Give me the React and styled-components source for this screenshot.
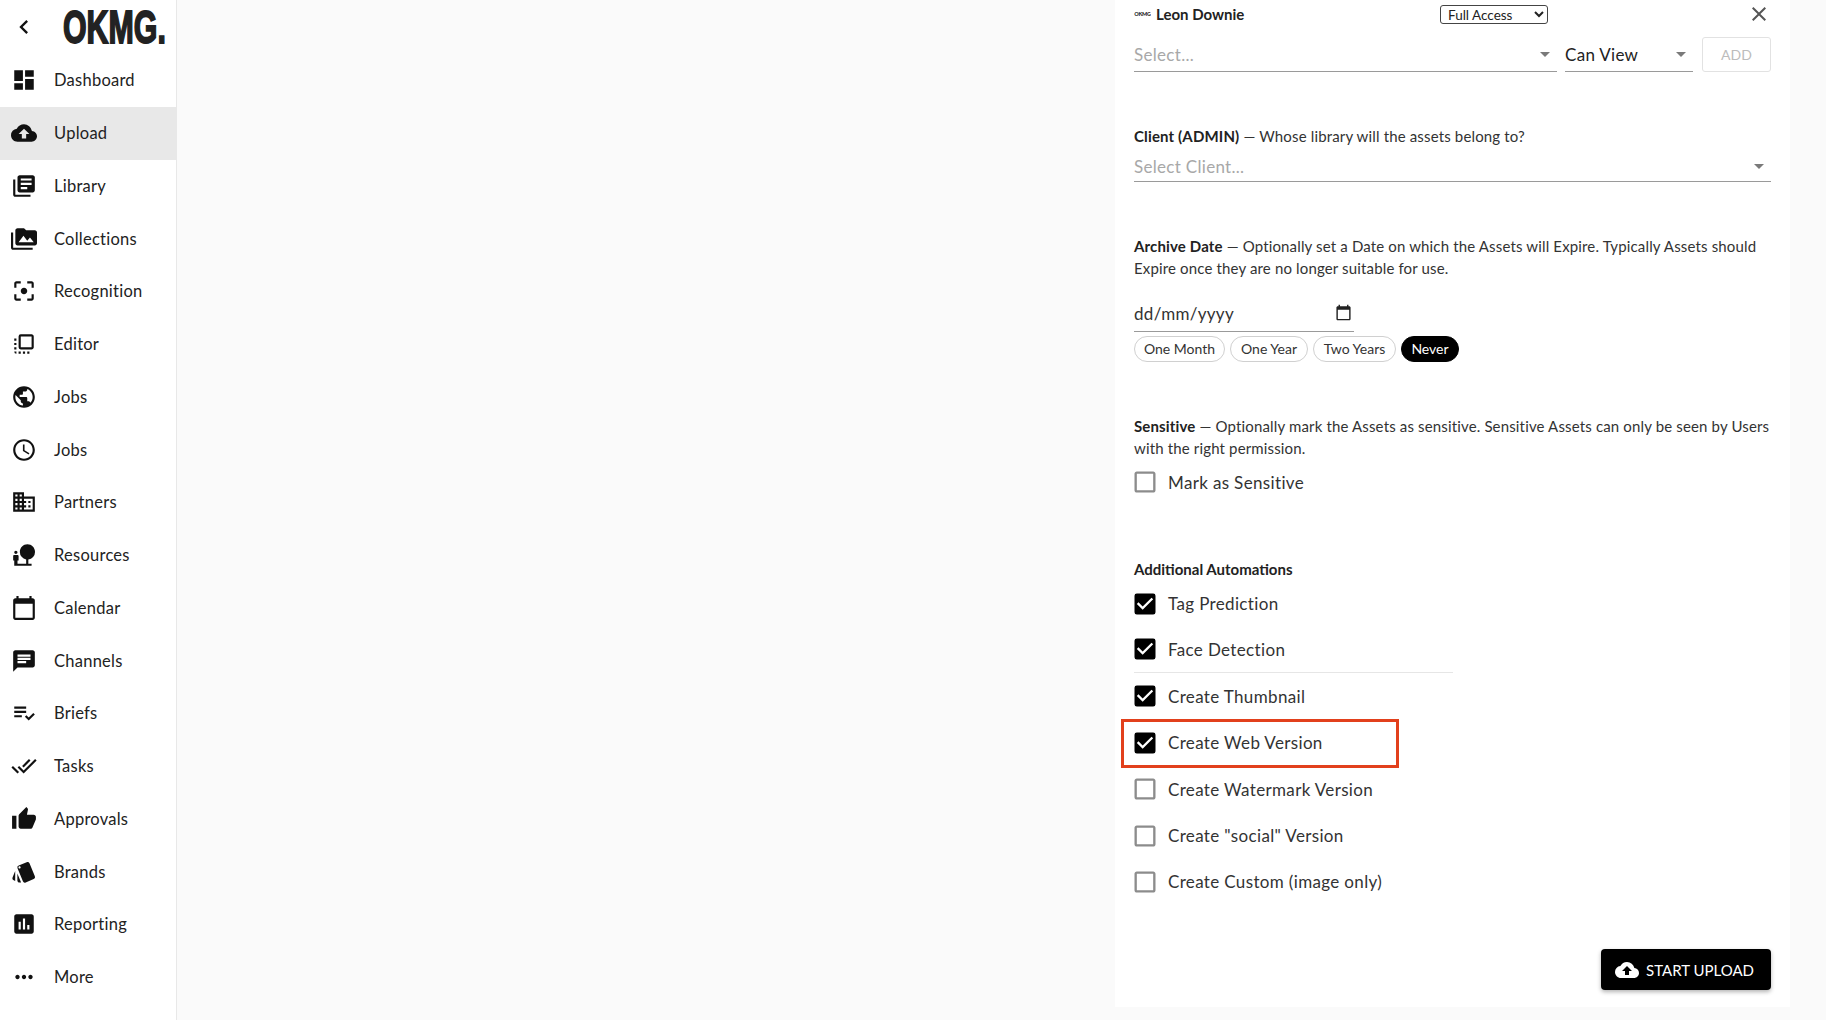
import React from "react";
import styled, { createGlobalStyle } from "styled-components";
import {
  MdDashboard, MdCloudUpload, MdLibraryBooks, MdPermMedia, MdFilterCenterFocus, MdFlipToFront,
  MdPublic, MdAccessTime, MdDomain, MdNaturePeople, MdChat,
  MdPlaylistAddCheck, MdDoneAll, MdThumbUp, MdStyle, MdAssessment, MdMoreHoriz,
  MdChevronLeft, MdArrowDropDown, MdCheckBox, MdCheckBoxOutlineBlank, MdClose, MdCalendarToday,
} from "react-icons/md";

const FONT = `"Lato", "Noto Sans", sans-serif`;

const Global = createGlobalStyle`
  html, body { margin: 0; padding: 0; height: 100%; background: #fafafa; }
  * { box-sizing: border-box; }
  body { font-family: ${FONT}; color: #222; overflow: hidden; }
`;

const Page = styled.div`
  display: flex;
  width: 1826px;
  height: 1020px;
  overflow: hidden;
  background: #fafafa;
`;

const Sidebar = styled.aside`
  width: 177px;
  flex: none;
  background: #fff;
  border-right: 1px solid #e8e8e8;
`;

const Brand = styled.div`
  height: 54px;
  display: flex;
  align-items: center;
  padding-left: 10px;
`;

const Back = styled(MdChevronLeft)`
  width: 28px;
  height: 28px;
  color: #111;
  flex: none;
`;

const Logo = styled.span`
  display: inline-block;
  margin-left: 25px;
  font-family: "Liberation Sans", sans-serif;
  font-weight: 700;
  font-size: 46px;
  line-height: 54px;
  color: #222;
  -webkit-text-stroke: 1.8px #222;
  transform: scaleX(0.66);
  transform-origin: left center;
  white-space: nowrap;
`;

const NavRow = styled.div`
  height: 52.75px;
  display: flex;
  align-items: center;
  gap: 17px;
  padding-left: 11px;
  background: ${(p) => (p.$active ? "#e8e8e8" : "transparent")};
  font-size: 16.5px;
  letter-spacing: 0.25px;
  color: #222;
  svg { width: 26px; height: 26px; color: #111; flex: none; }
`;

const Main = styled.main`
  flex: 1;
  display: flex;
  justify-content: flex-end;
  padding-right: 36px;
  align-items: flex-start;
`;

const Panel = styled.section`
  width: 675px;
  height: 1007px;
  background: #fff;
  padding: 0 19px;
  display: flex;
  flex-direction: column;
`;

const UserRow = styled.div`
  height: 28px;
  display: flex;
  align-items: center;
`;

const Avatar = styled.span`
  width: 17px;
  height: 17px;
  border-radius: 50%;
  font-size: 5.5px;
  font-weight: 900;
  display: flex;
  align-items: center;
  justify-content: center;
  color: #222;
  overflow: hidden;
  letter-spacing: -0.2px;
`;

const UserName = styled.span`
  margin-left: 5px;
  margin-top: -1px;
  font-size: 15px;
  font-weight: 700;
  color: #222;
  width: 284px;
`;

const AccessSelect = styled.select`
  width: 108px;
  height: 19px;
  padding: 0 0 0 3px;
  font-family: ${FONT};
  font-size: 13.5px;
  color: #222;
  background: #fff;
  border: 1px solid #444;
  border-radius: 3px;
`;

const CloseBtn = styled(MdClose)`
  margin-left: auto;
  width: 24px;
  height: 24px;
  color: #555;
`;

const AddRow = styled.div`
  margin-top: 9px;
  display: flex;
  height: 35px;
`;

const Field = styled.div`
  display: flex;
  align-items: center;
  justify-content: space-between;
  width: ${(p) => p.$w || "100%"};
  margin-right: ${(p) => p.$mr || 0};
  margin-top: ${(p) => p.$mt || 0};
  height: ${(p) => p.$h || "35px"};
  padding-bottom: ${(p) => p.$pb || 0};
  border-bottom: 1.5px solid #9a9a9a;
  font-size: 17px;
  letter-spacing: 0.3px;
  color: ${(p) => (p.$muted ? "#a8a8a8" : "#222")};
  svg { width: 24px; height: 24px; color: #7a7a7a; flex: none; }
`;

const AddBtn = styled.button`
  width: 69px;
  height: 35px;
  background: #fff;
  border: 1px solid #e2e2e2;
  border-radius: 3px;
  font-family: ${FONT};
  font-size: 14px;
  color: #bcbcbc;
  padding: 0;
`;

const Para = styled.p`
  margin: 53px 0 0;
  font-size: 15px;
  line-height: 22px;
  letter-spacing: 0.15px;
  color: #333;
  strong { font-weight: 700; color: #222; }
`;

const DateField = styled(Field)`
  width: 220px;
  height: 36px;
  margin-top: 17px;
  color: #333;
  svg { width: 17px; height: 17px; color: #222; margin: -3px 2px 0 0; }
`;

const Chips = styled.div`
  display: flex;
  gap: 5px;
  margin-top: 4px;
`;

const Chip = styled.span`
  height: 26px;
  width: ${(p) => p.$w};
  display: flex;
  align-items: center;
  justify-content: center;
  padding-bottom: 1px;
  border-radius: 13px;
  font-size: 14px;
  border: 1px solid ${(p) => (p.$on ? "#000" : "#d0d0d0")};
  background: ${(p) => (p.$on ? "#000" : "#fff")};
  color: ${(p) => (p.$on ? "#fff" : "#333")};
`;

const Heading = styled.div`
  margin-top: 53px;
  font-size: 15px;
  line-height: 22px;
  font-weight: 700;
  color: #222;
`;

const CheckRow = styled.label`
  position: relative;
  height: 46.4px;
  display: flex;
  align-items: center;
  gap: 9px;
  font-size: 17px;
  letter-spacing: 0.35px;
  color: #333;
  width: ${(p) => (p.$divided ? "319px" : "auto")};
  border-bottom: ${(p) => (p.$divided ? "1px solid #e6e6e6" : "none")};
  svg { width: 28px; height: 28px; margin-left: -3px; flex: none; color: ${(p) => (p.$on ? "#000" : "#8c8c8c")}; }
`;

const Highlight = styled.span`
  position: absolute;
  left: -13px;
  top: -1px;
  width: 278px;
  height: 49px;
  border: 3px solid #e2401c;
`;

const Footer = styled.div`
  margin-top: 44px;
  display: flex;
  justify-content: flex-end;
`;

const StartBtn = styled.button`
  width: 170px;
  height: 41px;
  display: flex;
  align-items: center;
  justify-content: center;
  gap: 7px;
  padding: 0 3px 0 0;
  background: #000;
  color: #fff;
  border: none;
  border-radius: 4px;
  font-family: ${FONT};
  font-size: 15px;
  box-shadow: 0 2px 4px rgba(0, 0, 0, 0.3);
  svg { width: 24px; height: 24px; }
`;

const nav = [
  [MdDashboard, "Dashboard"], [MdCloudUpload, "Upload", true], [MdLibraryBooks, "Library"],
  [MdPermMedia, "Collections"], [MdFilterCenterFocus, "Recognition"], [MdFlipToFront, "Editor"],
  [MdPublic, "Jobs"], [MdAccessTime, "Jobs"], [MdDomain, "Partners"], [MdNaturePeople, "Resources"],
  [MdCalendarToday, "Calendar"], [MdChat, "Channels"], [MdPlaylistAddCheck, "Briefs"],
  [MdDoneAll, "Tasks"], [MdThumbUp, "Approvals"], [MdStyle, "Brands"], [MdAssessment, "Reporting"],
  [MdMoreHoriz, "More"],
];

const checks = [
  ["Tag Prediction", true], ["Face Detection", true, true], ["Create Thumbnail", true],
  ["Create Web Version", true, false, true], ["Create Watermark Version"],
  ['Create "social" Version'], ["Create Custom (image only)"],
];

export default function App() {
  return (
    <Page>
      <Global />
      <Sidebar>
        <Brand>
          <Back />
          <Logo>OKMG.</Logo>
        </Brand>
        {nav.map(([Icon, label, active], i) => (
          <NavRow key={i} $active={active}>
            <Icon />
            {label}
          </NavRow>
        ))}
      </Sidebar>
      <Main>
        <Panel>
          <UserRow>
            <Avatar>OKMG</Avatar>
            <UserName>Leon Downie</UserName>
            <AccessSelect defaultValue="Full Access">
              <option>Full Access</option>
            </AccessSelect>
            <CloseBtn />
          </UserRow>
          <AddRow>
            <Field $w="423px" $mr="8px" $muted>
              Select...
              <MdArrowDropDown />
            </Field>
            <Field $w="128px" $mr="9px">
              Can View
              <MdArrowDropDown />
            </Field>
            <AddBtn>ADD</AddBtn>
          </AddRow>
          <Para>
            <strong>Client (ADMIN)</strong> — Whose library will the assets belong to?
          </Para>
          <Field $h="28px" $mt="7px" $pb="3px" $muted>
            Select Client...
            <MdArrowDropDown />
          </Field>
          <Para>
            <strong>Archive Date</strong> — Optionally set a Date on which the Assets will Expire. Typically Assets should Expire once they are no longer suitable for use.
          </Para>
          <DateField>
            dd/mm/yyyy
            <MdCalendarToday />
          </DateField>
          <Chips>
            <Chip $w="91px">One Month</Chip>
            <Chip $w="78px">One Year</Chip>
            <Chip $w="83px">Two Years</Chip>
            <Chip $w="58px" $on>Never</Chip>
          </Chips>
          <Para>
            <strong>Sensitive</strong> — Optionally mark the Assets as sensitive. Sensitive Assets can only be seen by Users with the right permission.
          </Para>
          <CheckRow>
            <MdCheckBoxOutlineBlank />
            Mark as Sensitive
          </CheckRow>
          <Heading>Additional Automations</Heading>
          {checks.map(([label, on, divided, hl]) => (
            <CheckRow key={label} $on={on} $divided={divided}>
              {on ? <MdCheckBox /> : <MdCheckBoxOutlineBlank />}
              {label}
              {hl && <Highlight />}
            </CheckRow>
          ))}
          <Footer>
            <StartBtn>
              <MdCloudUpload />
              START UPLOAD
            </StartBtn>
          </Footer>
        </Panel>
      </Main>
    </Page>
  );
}
